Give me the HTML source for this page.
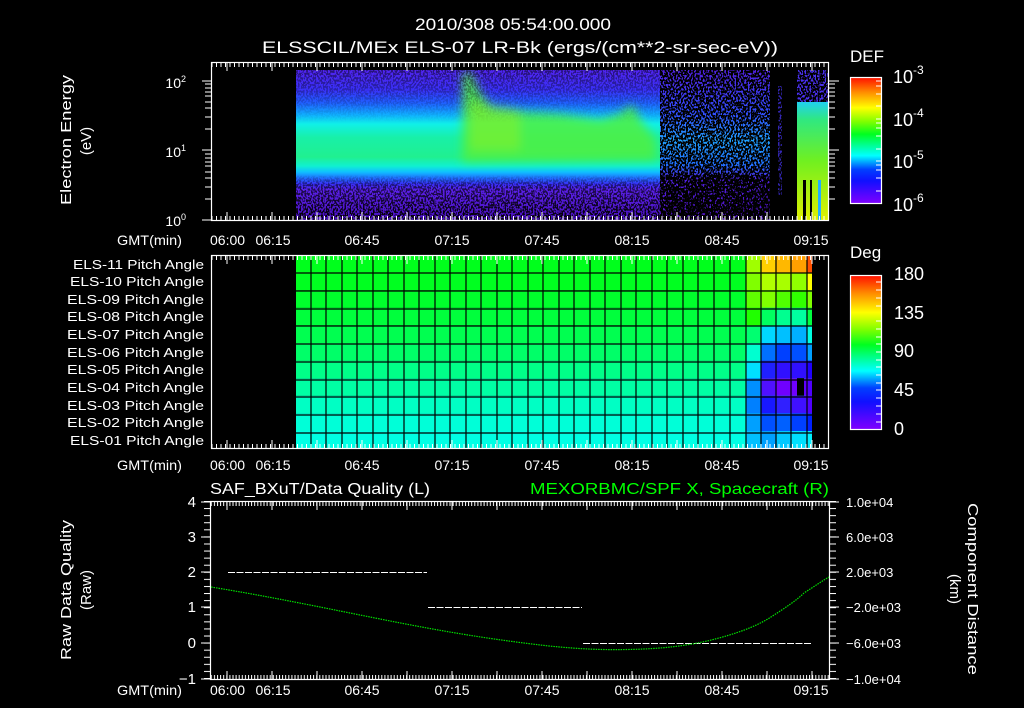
<!DOCTYPE html>
<html><head><meta charset="utf-8"><style>
html,body{margin:0;padding:0;background:#000;}
svg{display:block;}
text{font-family:"Liberation Sans",sans-serif;fill:#fff;}
</style></head><body>
<svg width="1024" height="708" viewBox="0 0 1024 708" xmlns="http://www.w3.org/2000/svg">
<defs>
<linearGradient id="cb" x1="0" y1="1" x2="0" y2="0">
<stop offset="0" stop-color="#8000ff"/><stop offset="0.18" stop-color="#1010ff"/><stop offset="0.27" stop-color="#0040ff"/>
<stop offset="0.38" stop-color="#00ffff"/><stop offset="0.55" stop-color="#00ff20"/><stop offset="0.65" stop-color="#80ff00"/>
<stop offset="0.76" stop-color="#ffff00"/><stop offset="0.88" stop-color="#ff9000"/><stop offset="1" stop-color="#ff1000"/>
</linearGradient>
<linearGradient id="spec" x1="0" y1="70" x2="0" y2="220" gradientUnits="userSpaceOnUse">
<stop offset="0" stop-color="#5024f0"/><stop offset="0.13" stop-color="#3a30f8"/><stop offset="0.22" stop-color="#2060ff"/>
<stop offset="0.30" stop-color="#10b0ff"/><stop offset="0.36" stop-color="#10f0e8"/><stop offset="0.45" stop-color="#18f0a8"/>
<stop offset="0.58" stop-color="#20f090"/><stop offset="0.64" stop-color="#10f0d0"/><stop offset="0.68" stop-color="#10c0ff"/>
<stop offset="0.72" stop-color="#2070ff"/><stop offset="0.76" stop-color="#3830f8"/><stop offset="0.80" stop-color="#5a20e8"/>
<stop offset="1" stop-color="#4a10c0"/>
</linearGradient>
<linearGradient id="spec2" x1="0" y1="70" x2="0" y2="220" gradientUnits="userSpaceOnUse">
<stop offset="0" stop-color="#5020e0"/><stop offset="0.3" stop-color="#3050ff"/><stop offset="0.47" stop-color="#20a0ff"/>
<stop offset="0.63" stop-color="#2070ff"/><stop offset="0.73" stop-color="#5020e0"/><stop offset="1" stop-color="#5010c0"/>
</linearGradient>
<linearGradient id="rblk" x1="0" y1="102" x2="0" y2="220" gradientUnits="userSpaceOnUse">
<stop offset="0" stop-color="#20d0f0"/><stop offset="0.15" stop-color="#30e880"/><stop offset="0.5" stop-color="#70f020"/><stop offset="1" stop-color="#e0f000"/>
</linearGradient>
<linearGradient id="mk" x1="0" y1="70" x2="0" y2="220" gradientUnits="userSpaceOnUse">
<stop offset="0" stop-color="#fff" stop-opacity="0.5"/><stop offset="0.25" stop-color="#fff" stop-opacity="0.1"/>
<stop offset="0.35" stop-color="#fff" stop-opacity="0"/><stop offset="0.7" stop-color="#fff" stop-opacity="0"/>
<stop offset="0.78" stop-color="#fff" stop-opacity="0.6"/><stop offset="1" stop-color="#fff" stop-opacity="1"/>
</linearGradient>
<mask id="m1"><rect x="0" y="0" width="1024" height="708" fill="url(#mk)"/></mask>
<filter id="spk" x="0" y="0" width="100%" height="100%">
<feTurbulence type="fractalNoise" baseFrequency="0.6 0.45" numOctaves="1" seed="4"/>
<feColorMatrix type="matrix" values="0 0 0 0 0  0 0 0 0 0  0 0 0 0 0  14 0 0 0 -6.5"/>
</filter>
<filter id="spk2" x="0" y="0" width="100%" height="100%">
<feTurbulence type="fractalNoise" baseFrequency="0.6 0.45" numOctaves="1" seed="9"/>
<feColorMatrix type="matrix" values="0 0 0 0 0  0 0 0 0 0  0 0 0 0 0  14 0 0 0 -6.0"/>
</filter>
<filter id="bl"><feGaussianBlur stdDeviation="5"/></filter>
<pattern id="tk" x="0" y="0" width="4.5" height="10" patternUnits="userSpaceOnUse"><rect x="0" y="0" width="1" height="10" fill="#fff"/></pattern>
<pattern id="tk3" x="0" y="0" width="3.1" height="10" patternUnits="userSpaceOnUse"><rect x="0" y="0" width="1" height="10" fill="#fff"/></pattern>
<pattern id="vt" x="0" y="501" width="10" height="7.08" patternUnits="userSpaceOnUse"><rect x="0" y="0" width="10" height="1" fill="#fff"/></pattern>
<clipPath id="c1"><rect x="296" y="70" width="364" height="150"/></clipPath>
</defs>

<text x="415" y="30" font-size="17" textLength="196" lengthAdjust="spacingAndGlyphs">2010/308 05:54:00.000</text>
<text x="262" y="53" font-size="17" textLength="516" lengthAdjust="spacingAndGlyphs">ELSSCIL/MEx ELS-07 LR-Bk  (ergs/(cm**2-sr-sec-eV))</text>

<!-- Panel 1 -->
<rect x="296" y="70" width="364" height="150" fill="url(#spec)"/>
<g clip-path="url(#c1)" filter="url(#bl)">
<path d="M462 162 L462 74 L470 70 L478 88 L492 110 L560 114 L600 120 L620 114 L632 104 L642 122 L656 140 L656 160 Z" fill="#50f040" opacity="0.85"/>
<path d="M470 100 L520 110 L520 150 L470 150 Z" fill="#90f020" opacity="0.5"/>
</g>
<rect x="660" y="70" width="110" height="150" fill="url(#spec2)"/>
<rect x="296" y="70" width="364" height="150" filter="url(#spk)" mask="url(#m1)"/>
<rect x="660" y="70" width="110" height="150" filter="url(#spk2)"/>
<rect x="660" y="175" width="110" height="45" filter="url(#spk2)"/>
<rect x="660" y="175" width="110" height="45" filter="url(#spk)"/>
<rect x="778" y="85" width="4" height="110" fill="#4030e0" opacity="0.8"/>
<rect x="778" y="85" width="4" height="110" filter="url(#spk2)"/>
<rect x="797" y="70" width="32" height="35" fill="#4a30f0"/>
<rect x="797" y="70" width="32" height="35" filter="url(#spk2)"/>
<rect x="797" y="102" width="32" height="118" fill="url(#rblk)"/>
<rect x="803" y="180" width="3" height="40" fill="#000"/>
<rect x="810" y="180" width="2" height="40" fill="#000"/>
<rect x="818" y="180" width="3" height="40" fill="#20b0ff"/>
<rect x="211.5" y="62.5" width="617" height="158" fill="none" stroke="#fff" stroke-width="1.2"/>
<rect x="212" y="63" width="617" height="4" fill="url(#tk)"/>
<rect x="212" y="216" width="617" height="4" fill="url(#tk)"/>
<path d="M227 63v8M272 63v8M317 63v8M362 63v8M407 63v8M452 63v8M497 63v8M542 63v8M587 63v8M632 63v8M677 63v8M722 63v8M767 63v8M812 63v8
M227 220v-8M272 220v-8M317 220v-8M362 220v-8M407 220v-8M452 220v-8M497 220v-8M542 220v-8M587 220v-8M632 220v-8M677 220v-8M722 220v-8M767 220v-8M812 220v-8" stroke="#fff" stroke-width="1"/>
<path d="M202 81h9M202 150h9M202 220h9M205 84h6M205 88h6M205 92h6M205 96h6M205 102h6M205 108h6M205 117h6M205 129h6M205 154h6M205 158h6M205 162h6M205 166h6M205 172h6M205 178h6M205 187h6M205 199h6
M829 81h10M829 150h10M829 84h6M829 88h6M829 92h6M829 96h6M829 102h6M829 108h6M829 117h6M829 129h6M829 154h6M829 158h6M829 162h6M829 166h6M829 172h6M829 178h6M829 187h6M829 199h6" stroke="#fff" stroke-width="1"/>
<text x="186" y="88" font-size="14" text-anchor="end">10<tspan dy="-6" font-size="9">2</tspan></text>
<text x="186" y="157" font-size="14" text-anchor="end">10<tspan dy="-6" font-size="9">1</tspan></text>
<text x="186" y="226" font-size="14" text-anchor="end">10<tspan dy="-6" font-size="9">0</tspan></text>
<text transform="translate(71,205) rotate(-90)" font-size="15" textLength="130" lengthAdjust="spacingAndGlyphs">Electron Energy</text>
<text transform="translate(91,141) rotate(-90)" font-size="15" text-anchor="middle">(eV)</text>
<text x="850" y="62" font-size="17">DEF</text>
<rect x="850.5" y="77.5" width="31" height="126" fill="url(#cb)" stroke="#fff" stroke-width="1.2"/>
<path d="M876 81h5M876 86h5M876 94h5M876 106h5M876 119h5M876 123h5M876 128h5M876 136h5M876 149h5M876 161h5M876 165h5M876 170h5M876 178h5M876 191h5" stroke="#fff"/>
<text x="893" y="83" font-size="18">10<tspan dy="-9" font-size="12">-3</tspan></text>
<text x="893" y="126" font-size="18">10<tspan dy="-9" font-size="12">-4</tspan></text>
<text x="893" y="168" font-size="18">10<tspan dy="-9" font-size="12">-5</tspan></text>
<text x="893" y="211" font-size="18">10<tspan dy="-9" font-size="12">-6</tspan></text>
<g font-size="14">
<text x="117" y="245" textLength="65" lengthAdjust="spacingAndGlyphs">GMT(min)</text>
<text x="210" y="245">06:00</text><text x="273" y="245" text-anchor="middle">06:15</text>
<text x="362" y="245" text-anchor="middle">06:45</text><text x="452" y="245" text-anchor="middle">07:15</text>
<text x="542" y="245" text-anchor="middle">07:45</text><text x="632" y="245" text-anchor="middle">08:15</text>
<text x="722" y="245" text-anchor="middle">08:45</text><text x="811" y="245" text-anchor="middle">09:15</text>
</g>

<!-- Panel 2 -->
<g>
<rect x="296" y="255" width="516" height="17.6" fill="#00ff1c"/>
<rect x="296" y="272.6" width="516" height="17.6" fill="#00ff20"/>
<rect x="296" y="290.2" width="516" height="17.6" fill="#00ff2c"/>
<rect x="296" y="307.8" width="516" height="17.6" fill="#00ff3c"/>
<rect x="296" y="325.4" width="516" height="17.6" fill="#00ff50"/>
<rect x="296" y="343" width="516" height="17.6" fill="#00ff68"/>
<rect x="296" y="360.6" width="516" height="17.6" fill="#00ff88"/>
<rect x="296" y="378.2" width="516" height="17.6" fill="#00ffa4"/>
<rect x="296" y="395.8" width="516" height="17.6" fill="#00ffc4"/>
<rect x="296" y="413.4" width="516" height="17.6" fill="#00ffd8"/>
<rect x="296" y="431" width="516" height="18" fill="#00ffe4"/>
</g>
<g>
<rect x="746" y="255" width="15" height="17.6" fill="#a0ff00"/><rect x="761" y="255" width="15" height="17.6" fill="#ffd000"/><rect x="776" y="255" width="15" height="17.6" fill="#ffb800"/><rect x="791" y="255" width="16" height="17.6" fill="#ffa000"/><rect x="807" y="255" width="5" height="17.6" fill="#ff5000"/>
<rect x="746" y="272.6" width="15" height="17.6" fill="#80ff00"/><rect x="761" y="272.6" width="15" height="17.6" fill="#b0ff00"/><rect x="776" y="272.6" width="15" height="17.6" fill="#a8ff00"/><rect x="791" y="272.6" width="16" height="17.6" fill="#90ff00"/><rect x="807" y="272.6" width="5" height="17.6" fill="#ffff00"/>
<rect x="746" y="290.2" width="15" height="17.6" fill="#60ff00"/><rect x="761" y="290.2" width="15" height="17.6" fill="#80ff00"/><rect x="776" y="290.2" width="15" height="17.6" fill="#50ff00"/><rect x="791" y="290.2" width="16" height="17.6" fill="#30ff00"/><rect x="807" y="290.2" width="5" height="17.6" fill="#80ff00"/>
<rect x="746" y="307.8" width="15" height="17.6" fill="#20ff00"/><rect x="761" y="307.8" width="15" height="17.6" fill="#00ff60"/><rect x="776" y="307.8" width="15" height="17.6" fill="#00ff90"/><rect x="791" y="307.8" width="16" height="17.6" fill="#00ffa0"/><rect x="807" y="307.8" width="5" height="17.6" fill="#00ff40"/>
<rect x="746" y="325.4" width="15" height="17.6" fill="#00ff70"/><rect x="761" y="325.4" width="15" height="17.6" fill="#00d8ff"/><rect x="776" y="325.4" width="15" height="17.6" fill="#00c0ff"/><rect x="791" y="325.4" width="16" height="17.6" fill="#00b0ff"/><rect x="807" y="325.4" width="5" height="17.6" fill="#00ffe0"/>
<rect x="746" y="343" width="15" height="17.6" fill="#00ffd0"/><rect x="761" y="343" width="15" height="17.6" fill="#0070ff"/><rect x="776" y="343" width="15" height="17.6" fill="#0040ff"/><rect x="791" y="343" width="16" height="17.6" fill="#0050ff"/><rect x="807" y="343" width="5" height="17.6" fill="#00a0ff"/>
<rect x="746" y="360.6" width="15" height="17.6" fill="#00e0ff"/><rect x="761" y="360.6" width="15" height="17.6" fill="#2020ff"/><rect x="776" y="360.6" width="15" height="17.6" fill="#3010ff"/><rect x="791" y="360.6" width="16" height="17.6" fill="#3010ff"/><rect x="807" y="360.6" width="5" height="17.6" fill="#2000ff"/>
<rect x="746" y="378.2" width="15" height="17.6" fill="#0090ff"/><rect x="761" y="378.2" width="15" height="17.6" fill="#5010ff"/><rect x="776" y="378.2" width="15" height="17.6" fill="#7000ff"/><rect x="797" y="378.2" width="7" height="17.6" fill="#000"/><rect x="804" y="378.2" width="3" height="17.6" fill="#6000ff"/><rect x="807" y="378.2" width="5" height="17.6" fill="#5000ff"/><rect x="791" y="378.2" width="6" height="17.6" fill="#7000ff"/>
<rect x="746" y="395.8" width="15" height="17.6" fill="#0080ff"/><rect x="761" y="395.8" width="15" height="17.6" fill="#1818ff"/><rect x="776" y="395.8" width="15" height="17.6" fill="#3020ff"/><rect x="791" y="395.8" width="16" height="17.6" fill="#4010ff"/><rect x="807" y="395.8" width="5" height="17.6" fill="#5000ff"/>
<rect x="746" y="413.4" width="15" height="17.6" fill="#00a0ff"/><rect x="761" y="413.4" width="15" height="17.6" fill="#0050ff"/><rect x="776" y="413.4" width="15" height="17.6" fill="#0060ff"/><rect x="791" y="413.4" width="16" height="17.6" fill="#0040ff"/><rect x="807" y="413.4" width="5" height="17.6" fill="#0020ff"/>
<rect x="746" y="431" width="15" height="18" fill="#00c0ff"/><rect x="761" y="431" width="15" height="18" fill="#00a0ff"/><rect x="776" y="431" width="15" height="18" fill="#00c8ff"/><rect x="791" y="431" width="16" height="18" fill="#00e0ff"/><rect x="807" y="431" width="5" height="18" fill="#00f0ff"/>
</g>
<g stroke="#000" stroke-width="1.2">
<path d="M311 255v194M326 255v194M342 255v194M357 255v194M373 255v194M388 255v194M404 255v194M419 255v194M435 255v194M450 255v194M466 255v194M481 255v194M497 255v194M512 255v194M528 255v194M543 255v194M559 255v194M574 255v194M590 255v194M605 255v194M621 255v194M636 255v194M652 255v194M667 255v194M683 255v194M698 255v194M714 255v194M730 255v194M746 255v194M761 255v194M776 255v194M791 255v194M807 255v194"/>
<path d="M296 273h516M296 291h516M296 309h516M296 326h516M296 344h516M296 362h516M296 380h516M296 397h516M296 415h516M296 433h516"/>
</g>
<rect x="211.5" y="255.5" width="617" height="193" fill="none" stroke="#fff" stroke-width="1.2"/>
<rect x="212" y="256" width="617" height="4" fill="url(#tk)"/>
<rect x="212" y="444" width="617" height="4" fill="url(#tk)"/>
<path d="M227 256v8M272 256v8M317 256v8M362 256v8M407 256v8M452 256v8M497 256v8M542 256v8M587 256v8M632 256v8M677 256v8M722 256v8M767 256v8M812 256v8
M227 448v-8M272 448v-8M317 448v-8M362 448v-8M407 448v-8M452 448v-8M497 448v-8M542 448v-8M587 448v-8M632 448v-8M677 448v-8M722 448v-8M767 448v-8M812 448v-8" stroke="#fff" stroke-width="1"/>
<g font-size="13">
<text x="73" y="269" textLength="131" lengthAdjust="spacingAndGlyphs">ELS-11 Pitch Angle</text>
<text x="70" y="286" textLength="134" lengthAdjust="spacingAndGlyphs">ELS-10 Pitch Angle</text>
<text x="67" y="304" textLength="137" lengthAdjust="spacingAndGlyphs">ELS-09 Pitch Angle</text>
<text x="67" y="321" textLength="137" lengthAdjust="spacingAndGlyphs">ELS-08 Pitch Angle</text>
<text x="67" y="339" textLength="137" lengthAdjust="spacingAndGlyphs">ELS-07 Pitch Angle</text>
<text x="67" y="357" textLength="137" lengthAdjust="spacingAndGlyphs">ELS-06 Pitch Angle</text>
<text x="67" y="374" textLength="137" lengthAdjust="spacingAndGlyphs">ELS-05 Pitch Angle</text>
<text x="67" y="392" textLength="137" lengthAdjust="spacingAndGlyphs">ELS-04 Pitch Angle</text>
<text x="67" y="410" textLength="137" lengthAdjust="spacingAndGlyphs">ELS-03 Pitch Angle</text>
<text x="67" y="427" textLength="137" lengthAdjust="spacingAndGlyphs">ELS-02 Pitch Angle</text>
<text x="70" y="445" textLength="134" lengthAdjust="spacingAndGlyphs">ELS-01 Pitch Angle</text>
</g>
<text x="850" y="258" font-size="17">Deg</text>
<rect x="850.5" y="275.5" width="31" height="154" fill="url(#cb)" stroke="#fff" stroke-width="1.2"/>
<path d="M876 282h5M876 290h5M876 298h5M876 306h5M876 321h5M876 329h5M876 337h5M876 344h5M876 352h5M876 360h5M876 367h5M876 375h5M876 383h5M876 390h5M876 398h5M876 406h5M876 414h5M876 422h5" stroke="#fff"/>
<g font-size="18">
<text x="894" y="280">180</text><text x="894" y="319">135</text><text x="894" y="357">90</text><text x="894" y="396">45</text><text x="894" y="435">0</text>
</g>
<g font-size="14">
<text x="117" y="470" textLength="65" lengthAdjust="spacingAndGlyphs">GMT(min)</text>
<text x="210" y="470">06:00</text><text x="273" y="470" text-anchor="middle">06:15</text>
<text x="362" y="470" text-anchor="middle">06:45</text><text x="452" y="470" text-anchor="middle">07:15</text>
<text x="542" y="470" text-anchor="middle">07:45</text><text x="632" y="470" text-anchor="middle">08:15</text>
<text x="722" y="470" text-anchor="middle">08:45</text><text x="811" y="470" text-anchor="middle">09:15</text>
</g>

<!-- Panel 3 -->
<text x="210" y="494" font-size="16" textLength="220" lengthAdjust="spacingAndGlyphs">SAF_BXuT/Data Quality (L)</text>
<text x="530" y="494" font-size="16" textLength="299" lengthAdjust="spacingAndGlyphs" style="fill:#00ff00">MEXORBMC/SPF X, Spacecraft (R)</text>
<rect x="210.5" y="501.5" width="619" height="178" fill="none" stroke="#fff" stroke-width="1.2"/>
<rect x="211" y="502" width="618" height="4" fill="url(#tk3)"/>
<rect x="211" y="675" width="618" height="4" fill="url(#tk3)"/>
<path d="M227 502v8M272 502v8M317 502v8M362 502v8M407 502v8M452 502v8M497 502v8M542 502v8M587 502v8M632 502v8M677 502v8M722 502v8M767 502v8M812 502v8
M227 679v-8M272 679v-8M317 679v-8M362 679v-8M407 679v-8M452 679v-8M497 679v-8M542 679v-8M587 679v-8M632 679v-8M677 679v-8M722 679v-8M767 679v-8M812 679v-8" stroke="#fff" stroke-width="1"/>
<rect x="204" y="501" width="6" height="178" fill="url(#vt)"/>
<rect x="830" y="501" width="6" height="178" fill="url(#vt)"/>
<path d="M201 502h9M201 537h9M201 572h9M201 607h9M201 643h9M201 679h9M830 502h9M830 537h9M830 572h9M830 607h9M830 643h9M830 679h9" stroke="#fff"/>
<g font-size="15" text-anchor="end">
<text x="196" y="507">4</text><text x="196" y="542">3</text><text x="196" y="577">2</text><text x="196" y="612">1</text><text x="196" y="648">0</text><text x="196" y="684">−1</text>
</g>
<g font-size="13">
<text x="846" y="507">1.0e+04</text><text x="846" y="542">6.0e+03</text><text x="846" y="577">2.0e+03</text>
<text x="846" y="612">−2.0e+03</text><text x="846" y="648">−6.0e+03</text><text x="846" y="684">−1.0e+04</text>
</g>
<text transform="translate(71,660) rotate(-90)" font-size="15" textLength="140" lengthAdjust="spacingAndGlyphs">Raw Data Quality</text>
<text transform="translate(91,590) rotate(-90)" font-size="15" text-anchor="middle">(Raw)</text>
<text transform="translate(968,503) rotate(90)" font-size="15" textLength="172" lengthAdjust="spacingAndGlyphs">Component Distance</text>
<text transform="translate(950,589) rotate(90)" font-size="15" text-anchor="middle">(km)</text>
<g stroke="#fff" stroke-width="1" stroke-dasharray="7 1.5" fill="none">
<path d="M228 572.5H427M428 607.5H582M583 643.5H812"/>
</g>
<path d="M211 587 C260 595 300 603 350 613 C420 627 470 637 549 646 C580 649 600 650 627 649.5 C660 649 690 646 719 638 C745 631 760 624 771 617 C785 608 797 600 804 593 C815 586 822 581 829 577" fill="none" stroke="#00e000" stroke-width="1.2" stroke-dasharray="1.5 1"/>
<g font-size="14">
<text x="117" y="695" textLength="65" lengthAdjust="spacingAndGlyphs">GMT(min)</text>
<text x="210" y="695">06:00</text><text x="273" y="695" text-anchor="middle">06:15</text>
<text x="362" y="695" text-anchor="middle">06:45</text><text x="452" y="695" text-anchor="middle">07:15</text>
<text x="542" y="695" text-anchor="middle">07:45</text><text x="632" y="695" text-anchor="middle">08:15</text>
<text x="722" y="695" text-anchor="middle">08:45</text><text x="811" y="695" text-anchor="middle">09:15</text>
</g>
</svg>
</body></html>
